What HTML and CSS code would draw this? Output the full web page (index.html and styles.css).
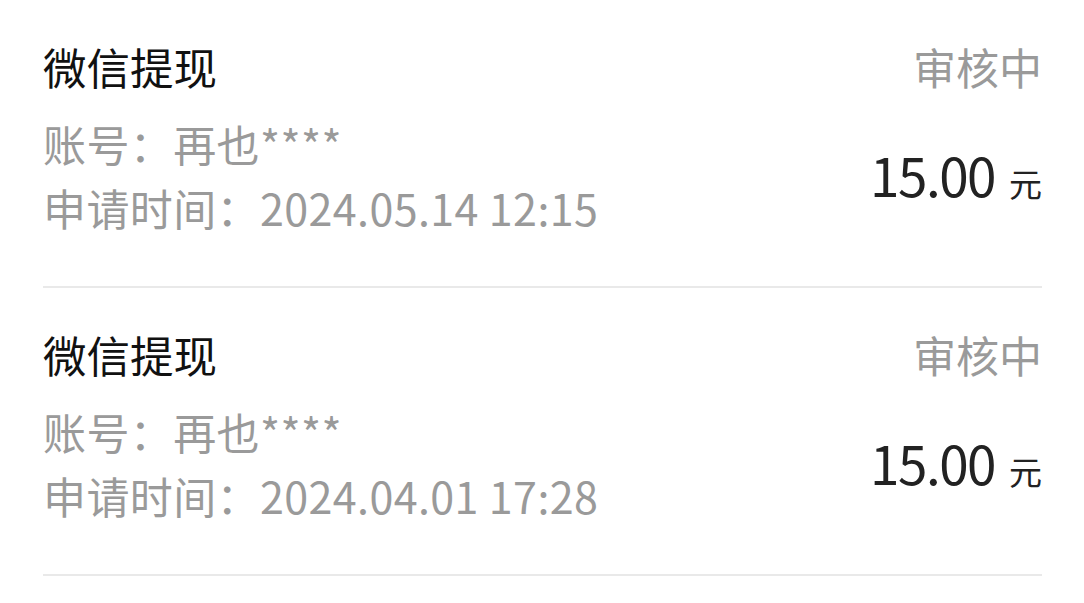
FILE: index.html
```html
<!DOCTYPE html>
<html lang="zh-CN">
<head>
  <meta charset="UTF-8">
  <meta name="viewport" content="width=device-width, initial-scale=1.0">
  <title>提现记录</title>
  <link rel="stylesheet" href="styles.css">
</head>
<body>
  <ul class="records">
    <li class="record">
      <div class="record-head">
        <span class="record-title">微信提现</span>
        <span class="record-status">审核中</span>
      </div>
      <div class="record-body">
        <div class="record-info">
          <p>账号：再也****</p>
          <p>申请时间：2024.05.14 12:15</p>
        </div>
        <div class="record-amount">15.00<span class="unit">元</span></div>
      </div>
    </li>
    <li class="record">
      <div class="record-head">
        <span class="record-title">微信提现</span>
        <span class="record-status">审核中</span>
      </div>
      <div class="record-body">
        <div class="record-info">
          <p>账号：再也****</p>
          <p>申请时间：2024.04.01 17:28</p>
        </div>
        <div class="record-amount">15.00<span class="unit">元</span></div>
      </div>
    </li>
  </ul>
</body>
</html>
```

FILE: styles.css
```css
* {
  margin: 0;
  padding: 0;
  box-sizing: border-box;
  font-family: "Noto Sans CJK SC", "Noto Sans", sans-serif;
}
body {
  background: #fff;
}
.records {
  list-style: none;
  padding: 0 42px 0 43px;
}
.record {
  padding: 44px 0 47px;
  border-bottom: 2px solid #e9e9e9;
}
.record-head {
  display: flex;
  justify-content: space-between;
  align-items: center;
  height: 44px;
  margin-bottom: 23px;
}
.record-title {
  font-size: 43.5px;
  color: #111;
}
.record-status {
  font-size: 43px;
  color: #9a9a9a;
}
.record-body {
  display: flex;
  justify-content: space-between;
  align-items: center;
}
.record-info p {
  font-size: 43px;
  line-height: 64px;
  letter-spacing: 0.4px;
  color: #9a9a9a;
}
.record-amount {
  font-size: 53px;
  letter-spacing: -1.5px;
  color: #222;
  display: flex;
  align-items: baseline;
  padding-bottom: 3px;
}
.unit {
  font-size: 33px;
  letter-spacing: 0;
  margin-left: 14px;
}
```
